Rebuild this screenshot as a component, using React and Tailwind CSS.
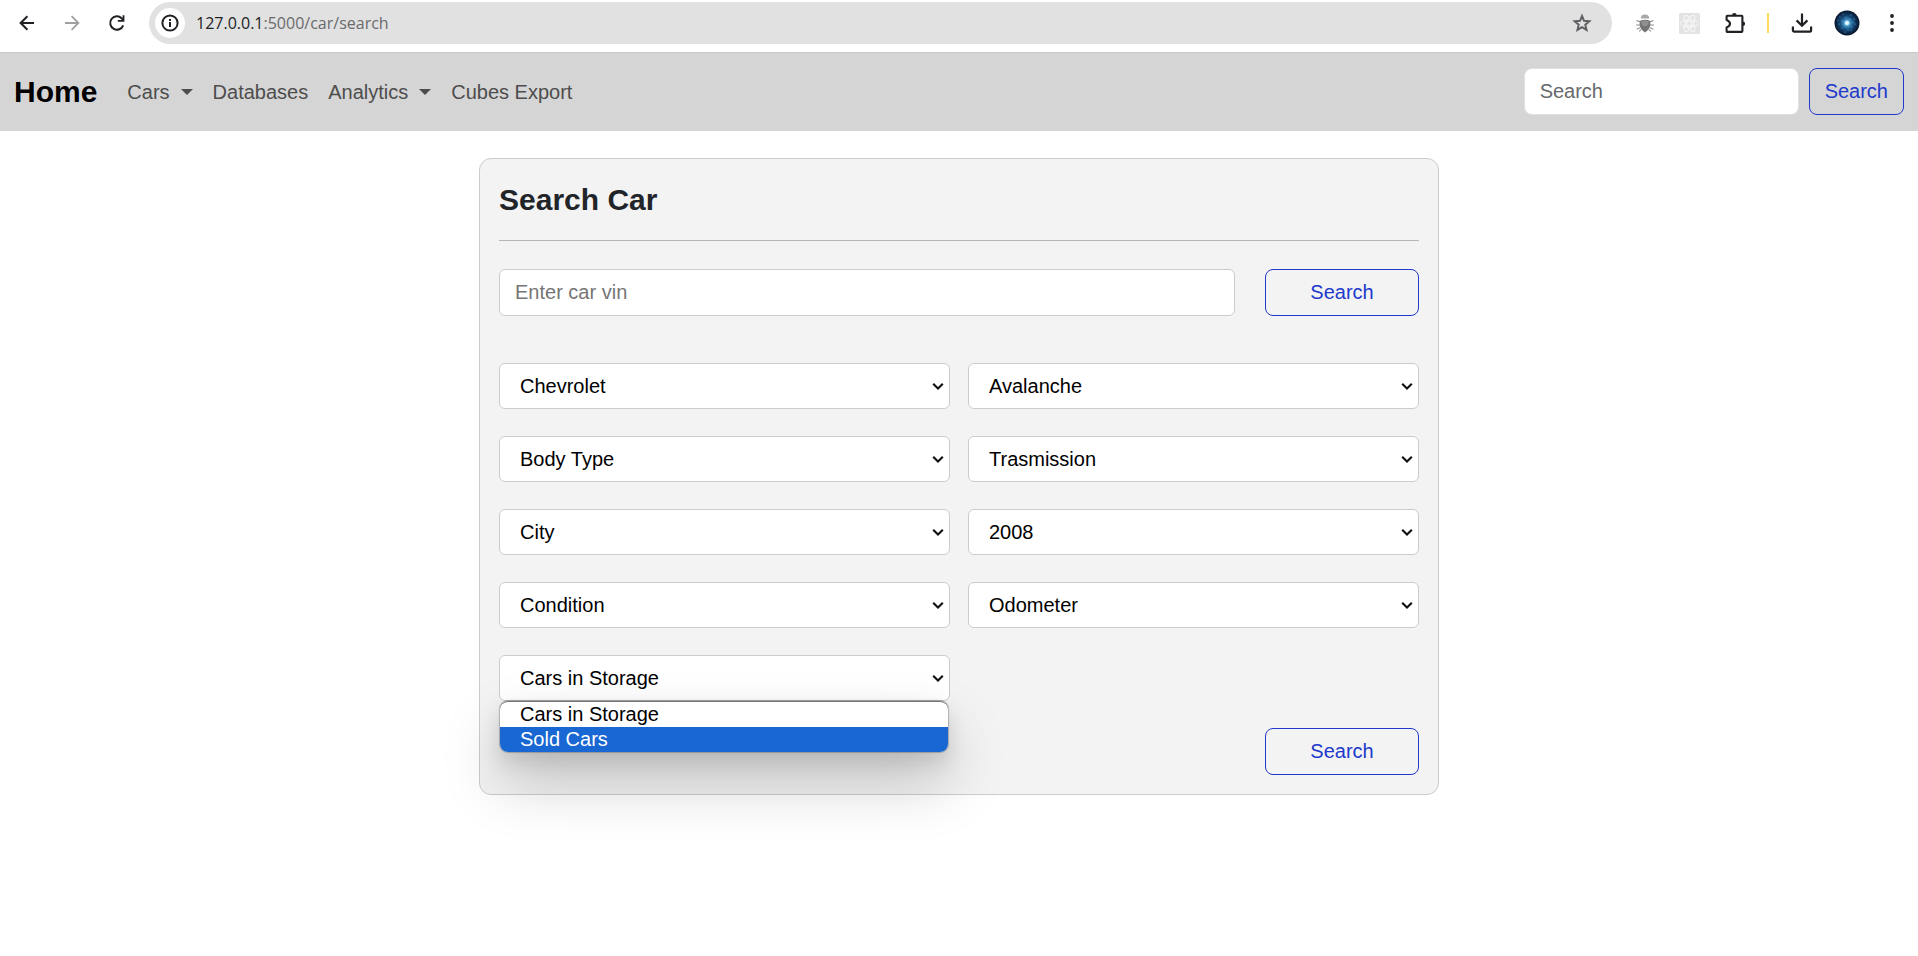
import { useState } from "react";

const toolButton = "flex h-10 w-[45px] shrink-0 items-center justify-center";
const outlineButton =
  "h-[47px] rounded-lg border border-[#2139cb] pb-px text-[20px] leading-[24px] text-[#2139cb]";

function BackIcon() {
  return (
    <svg width="16" height="16" viewBox="0 0 16 16" fill="none" stroke="currentColor" strokeWidth="2">
      <path d="M15 8H2M8.400 1.200L1.600 8l6.800 6.800" />
    </svg>
  );
}

function ForwardIcon() {
  return (
    <svg width="16" height="16" viewBox="0 0 16 16" fill="none" stroke="currentColor" strokeWidth="1.800">
      <path d="M1 8h13M7.600 1.200L14.400 8l-6.800 6.800" />
    </svg>
  );
}

function ReloadIcon() {
  return (
    <svg width="18" height="18" viewBox="0 0 18 18" fill="none">
      <path
        d="M15.200 11.300A6.700 6.700 0 1 1 13.600 4.200L15 5.800"
        stroke="currentColor"
        strokeWidth="2"
      />
      <path d="M16.400 1.200v6.600H9.800V6h4.800V1.200z" fill="currentColor" />
    </svg>
  );
}

function InfoIcon() {
  return (
    <svg width="18" height="18" viewBox="0 0 18 18" fill="none">
      <circle cx="9" cy="9" r="7.600" stroke="#202124" strokeWidth="2" />
      <path d="M8 8h2v5H8zM8 5h2v2H8z" fill="#202124" />
    </svg>
  );
}

function StarIcon() {
  return (
    <svg width="20" height="20" viewBox="0 0 20 20" fill="none" stroke="#5f6063" strokeWidth="2">
      <path d="M10 3l2 4.800 5.300.4-4 3.500 1.200 5.200-4.500-2.800-4.500 2.800 1.200-5.200-4-3.500L8 7.800z" />
    </svg>
  );
}

function BugIcon() {
  return (
    <svg width="20" height="20" viewBox="0 0 20 20" fill="none">
      <g stroke="#909090" strokeWidth="1.100">
        <path d="M5.500 8.800L1.600 7.600M14.500 8.800l3.900-1.200M5 12H1M15 12h4M5.200 14.800L1.600 16.200M14.800 14.800l3.600 1.400M6.400 16.600L4 18.400M13.600 16.600l2.400 1.800" />
      </g>
      <path d="M5.800 5.400a4.200 4 0 0 1 8.400 0z" fill="#a8a8a8" />
      <path d="M4.600 8q5.400-2.600 10.800 0 .8 8.200-5.400 11.400Q3.800 16.200 4.600 8z" fill="#747474" />
      <path d="M6.200 8.400q3.800-1.600 7.600 0-.2 3-1.800 4.600H8Q6.400 11.400 6.200 8.400z" fill="#909090" />
    </svg>
  );
}

function AtomIcon() {
  return (
    <svg width="21" height="21" viewBox="0 0 21 21" fill="none">
      <rect width="21" height="21" rx="1.500" fill="#e3e3e3" />
      <g stroke="#f8f8f8" strokeWidth="1">
        <ellipse cx="10.500" cy="10.500" rx="9" ry="3.600" />
        <ellipse cx="10.500" cy="10.500" rx="9" ry="3.600" transform="rotate(60 10.500 10.500)" />
        <ellipse cx="10.500" cy="10.500" rx="9" ry="3.600" transform="rotate(120 10.500 10.500)" />
        <circle cx="10.500" cy="10.500" r="2.200" />
      </g>
    </svg>
  );
}

function PuzzleIcon() {
  return (
    <svg width="22" height="22" viewBox="0 0 22 22" fill="none">
      <path
        d="M3.400 3.700h14.200a.8.8 0 0 1 .8.8v14.600a.8.8 0 0 1-.8.8H3.400a.8.8 0 0 1-.8-.8v-3.600q3.400-1.200 3.400-3.700T2.600 8V4.500a.8.8 0 0 1 .8-.8z"
        stroke="#202124"
        strokeWidth="2.100"
        strokeLinejoin="round"
      />
      <path d="M8 3.400a2.300 2.300 0 0 1 4.600 0zM18.800 9.500a2.300 2.300 0 0 1 0 4.600z" fill="#202124" />
    </svg>
  );
}

function DownloadIcon() {
  return (
    <svg width="22" height="22" viewBox="0 0 22 22" fill="none" stroke="#202124" strokeWidth="2.200">
      <path d="M11 1.400v12M5.600 8.400L11 13.800l5.400-5.400M1.900 14.400v3.800a1.400 1.400 0 0 0 1.400 1.400h15.400a1.400 1.400 0 0 0 1.400-1.400v-3.800" />
    </svg>
  );
}

function ProfileIcon() {
  const stars = [
    [6, 7], [9, 4], [17, 5], [20, 9], [5, 14], [8, 18], [18, 17], [14, 20], [21, 14], [12, 7], [16, 9], [8, 11],
    [17, 20], [11, 22], [4, 10], [15, 16], [19, 12], [10, 15],
  ];
  return (
    <svg width="26" height="26" viewBox="0 0 26 26">
      <defs>
        <radialGradient id="galaxy">
          <stop offset="0" stopColor="#ffffff" />
          <stop offset="0.12" stopColor="#d4f2ff" />
          <stop offset="0.26" stopColor="#3d8fc0" />
          <stop offset="0.55" stopColor="#154a78" />
          <stop offset="0.85" stopColor="#0a2444" />
          <stop offset="1" stopColor="#061226" />
        </radialGradient>
      </defs>
      <circle cx="13" cy="13" r="12.500" fill="url(#galaxy)" />
      {stars.map(([x, y]) => (
        <circle key={`${x}-${y}`} cx={x} cy={y} r="0.600" fill="#62abd4" />
      ))}
    </svg>
  );
}

function DotsIcon() {
  return (
    <svg width="4" height="18" viewBox="0 0 4 18" fill="#202124">
      <circle cx="2" cy="2" r="1.900" />
      <circle cx="2" cy="9" r="1.900" />
      <circle cx="2" cy="16" r="1.900" />
    </svg>
  );
}

function Caret() {
  return (
    <svg width="12" height="6" viewBox="0 0 12 6" fill="currentColor">
      <path d="M0 0h12L6 6z" />
    </svg>
  );
}

function BrowserBar() {
  return (
    <header className="flex h-[52px] items-start bg-white px-1 text-[#202124]">
      <div className="flex pt-[3px]">
        <button type="button" aria-label="Back" className={toolButton}>
          <BackIcon />
        </button>
        <button type="button" aria-label="Forward" className={`${toolButton} text-[#a0a0a1]`}>
          <ForwardIcon />
        </button>
        <button type="button" aria-label="Reload" className={toolButton}>
          <ReloadIcon />
        </button>
      </div>
      <div className="mx-[10px] mt-[2px] flex h-[42px] min-w-0 flex-1 items-center rounded-full bg-[#e1e1e1] px-[6px]">
        <button
          type="button"
          aria-label="Site information"
          className="flex size-[30px] items-center justify-center rounded-full bg-white"
        >
          <InfoIcon />
        </button>
        <p className="ml-[11px] flex-1 font-['Open_Sans',sans-serif] text-[16px] leading-[24px] text-[#6a6b6d]">
          <span className="text-[#202124]">127.0.0.1</span>:5000/car/search
        </p>
        <button type="button" aria-label="Bookmark" className="mr-[14px] flex size-5 items-center">
          <StarIcon />
        </button>
      </div>
      <div className="flex items-center pt-[3px]">
        <button type="button" aria-label="Debugger extension" className={toolButton}>
          <BugIcon />
        </button>
        <button type="button" aria-label="React extension" className={toolButton}>
          <AtomIcon />
        </button>
        <button type="button" aria-label="Extensions" className={toolButton}>
          <PuzzleIcon />
        </button>
        <span className="mx-[10px] h-5 w-[2px] bg-[#fdd95c]" />
        <button type="button" aria-label="Downloads" className={toolButton}>
          <DownloadIcon />
        </button>
        <button type="button" aria-label="Profile" className={toolButton}>
          <ProfileIcon />
        </button>
        <button type="button" aria-label="Menu" className={toolButton}>
          <DotsIcon />
        </button>
      </div>
    </header>
  );
}

function NavBar() {
  return (
    <nav className="flex items-center border-t border-[#c8c8c8] bg-[#d5d5d5] px-[14px] pt-[15px] pb-4">
      <a href="#home" className="text-[30px] leading-[46px] font-bold text-black">
        Home
      </a>
      <div className="ml-[30px] flex items-center gap-5 leading-[30px] text-[#4d4d4d]">
        <button type="button" className="flex items-center gap-[11px]">
          Cars <Caret />
        </button>
        <a href="#databases">Databases</a>
        <button type="button" className="flex items-center gap-[11px]">
          Analytics <Caret />
        </button>
        <a href="#cubes-export">Cubes Export</a>
      </div>
      <form className="ml-auto flex gap-[10px]" onSubmit={(e) => e.preventDefault()}>
        <input
          type="search"
          aria-label="Search"
          placeholder="Search"
          className="h-[47px] w-[275px] rounded-lg border border-[#dee2e6] bg-white px-[15px] text-[20px] placeholder:text-[#66696c]"
        />
        <button type="submit" className={`${outlineButton} px-[15px]`}>
          Search
        </button>
      </form>
    </nav>
  );
}

function SelectField({ label, options, children }) {
  return (
    <div className="relative">
      <select
        aria-label={label}
        className="block h-[46px] w-full appearance-none rounded-md border border-[#cccccc] bg-white pr-8 pl-5 text-[20px] text-black"
      >
        {options.map((option) => (
          <option key={option}>{option}</option>
        ))}
      </select>
      <svg
        className="pointer-events-none absolute top-[19px] right-[6px]"
        width="12"
        height="9"
        viewBox="0 0 12 9"
        fill="none"
        stroke="#101010"
        strokeWidth="2.100"
      >
        <path d="M1.200 1.700L6 6.500l4.800-4.800" />
      </svg>
      {children}
    </div>
  );
}

const fields = [
  ["Brand", ["Chevrolet"]],
  ["Model", ["Avalanche"]],
  ["Body type", ["Body Type"]],
  ["Transmission", ["Trasmission"]],
  ["City", ["City"]],
  ["Year", ["2008"]],
  ["Condition", ["Condition"]],
  ["Odometer", ["Odometer"]],
];

const statuses = ["Cars in Storage", "Sold Cars"];

function StatusMenu({ active, onHover }) {
  return (
    <ul
      role="listbox"
      aria-label="Car status options"
      className="absolute top-full right-[2px] left-px z-10 overflow-hidden rounded-lg border-t border-[#767676] bg-white shadow-[0_0_1px_1px_rgba(0,0,0,0.22),0_10px_20px_rgba(0,0,0,0.12),0_30px_60px_rgba(0,0,0,0.22)]"
    >
      {statuses.map((status, i) => (
        <li
          key={status}
          role="option"
          aria-selected={i === active}
          onMouseEnter={() => onHover(i)}
          className={`pl-5 leading-[25px] ${i === active ? "bg-[#1967d2] text-white" : "text-black"}`}
        >
          {status}
        </li>
      ))}
    </ul>
  );
}

function SearchCard() {
  const [active, setActive] = useState(1);
  return (
    <section className="mx-auto mt-[27px] w-full max-w-[960px] rounded-xl border border-[#cccccc] bg-[#f3f3f3] p-[19px]">
      <h1 className="text-[30px] leading-[44px] font-bold text-[#212529]">Search Car</h1>
      <hr className="mt-[18px] border-[#b5b5b5]" />
      <form className="mt-7 flex gap-[30px]" onSubmit={(e) => e.preventDefault()}>
        <input
          type="text"
          aria-label="Car vin"
          placeholder="Enter car vin"
          className="h-[47px] min-w-0 flex-1 rounded-md border border-[#cccccc] bg-white px-[15px] text-[20px] placeholder:text-[#757575]"
        />
        <button type="submit" className={`${outlineButton} w-[154px]`}>
          Search
        </button>
      </form>
      <form className="mt-[47px]" onSubmit={(e) => e.preventDefault()}>
        <div className="grid grid-cols-2 gap-x-[18px] gap-y-[27px]">
          {fields.map(([label, options]) => (
            <SelectField key={label} label={label} options={options} />
          ))}
          <SelectField label="Car status" options={statuses}>
            <StatusMenu active={active} onHover={setActive} />
          </SelectField>
        </div>
        <div className="mt-[27px] flex justify-end">
          <button type="submit" className={`${outlineButton} w-[154px]`}>
            Search
          </button>
        </div>
      </form>
    </section>
  );
}

export default function App() {
  return (
    <div className="min-h-screen bg-white font-['Liberation_Sans',Arial,sans-serif] text-[20px] text-[#212529]">
      <BrowserBar />
      <NavBar />
      <main className="pb-10">
        <SearchCard />
      </main>
    </div>
  );
}
